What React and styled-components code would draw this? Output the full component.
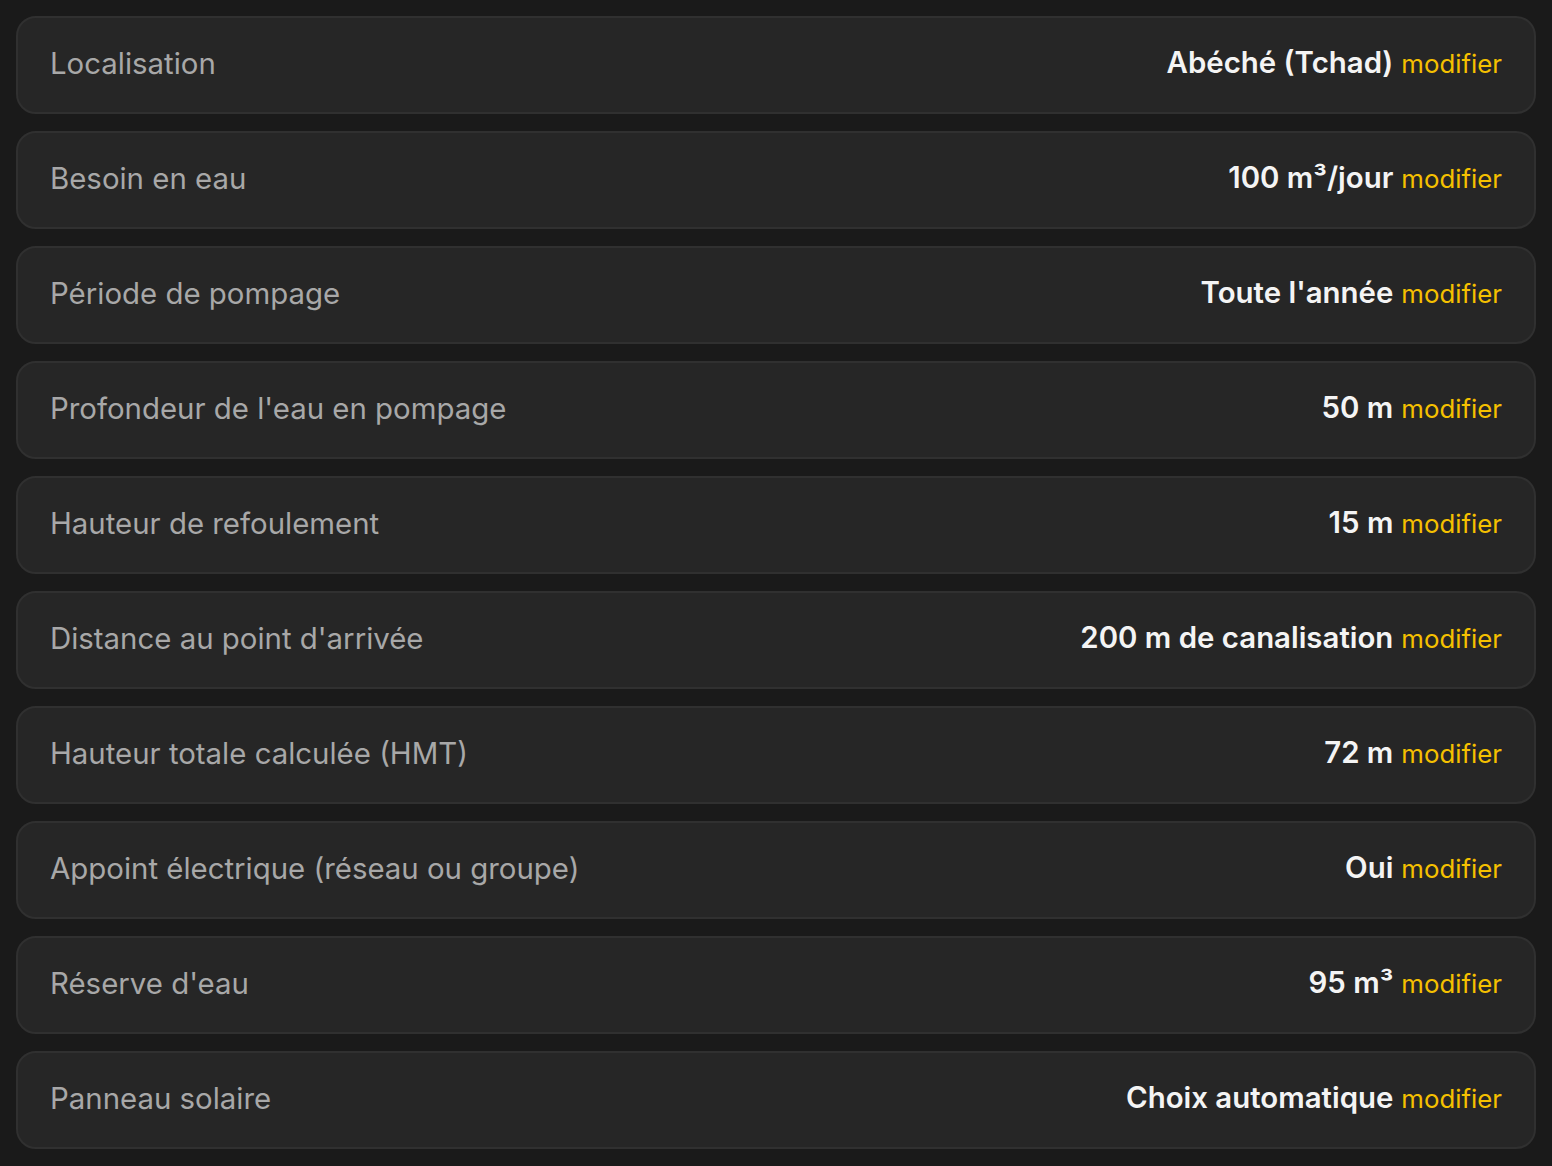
import React from "react";
import styled, { createGlobalStyle } from "styled-components";

const Global = createGlobalStyle`
  html, body { margin: 0; padding: 0; background: #1a1a1a; }
  body { font-family: Inter, "Noto Sans", sans-serif; -webkit-font-smoothing: antialiased; }
`;

const List = styled.div`
  display: flex;
  flex-direction: column;
  gap: 17px;
  padding: 16px;
  background: #1a1a1a;
  min-height: 1166px;
  box-sizing: border-box;
`;

const Row = styled.div`
  display: flex;
  align-items: center;
  justify-content: space-between;
  height: 98px;
  box-sizing: border-box;
  padding: 0 32px 3px 32px;
  background: #262626;
  border: 2px solid #303030;
  border-radius: 20px;
`;

const Label = styled.span`
  font-size: 29.4px;
  line-height: 36px;
  color: #a8a8a8;
  font-weight: 400;
`;

const Right = styled.div`
  display: flex;
  align-items: baseline;
  gap: 8px;
`;

const Value = styled.span`
  font-size: 29.4px;
  line-height: 36px;
  font-weight: 600;
  color: #f4f4f4;
`;

const Modify = styled.span`
  font-size: 25.8px;
  line-height: 36px;
  color: #f5c000;
  cursor: pointer;
`;

const rows = [
  ["Localisation", "Abéché (Tchad)"],
  ["Besoin en eau", "100 m³/jour"],
  ["Période de pompage", "Toute l'année"],
  ["Profondeur de l'eau en pompage", "50 m"],
  ["Hauteur de refoulement", "15 m"],
  ["Distance au point d'arrivée", "200 m de canalisation"],
  ["Hauteur totale calculée (HMT)", "72 m"],
  ["Appoint électrique (réseau ou groupe)", "Oui"],
  ["Réserve d'eau", "95 m³"],
  ["Panneau solaire", "Choix automatique"],
];

export default function App() {
  return (
    <>
      <Global />
      <List>
        {rows.map(([l, v]) => (
          <Row key={l}>
            <Label>{l}</Label>
            <Right>
              <Value>{v}</Value>
              <Modify>modifier</Modify>
            </Right>
          </Row>
        ))}
      </List>
    </>
  );
}
